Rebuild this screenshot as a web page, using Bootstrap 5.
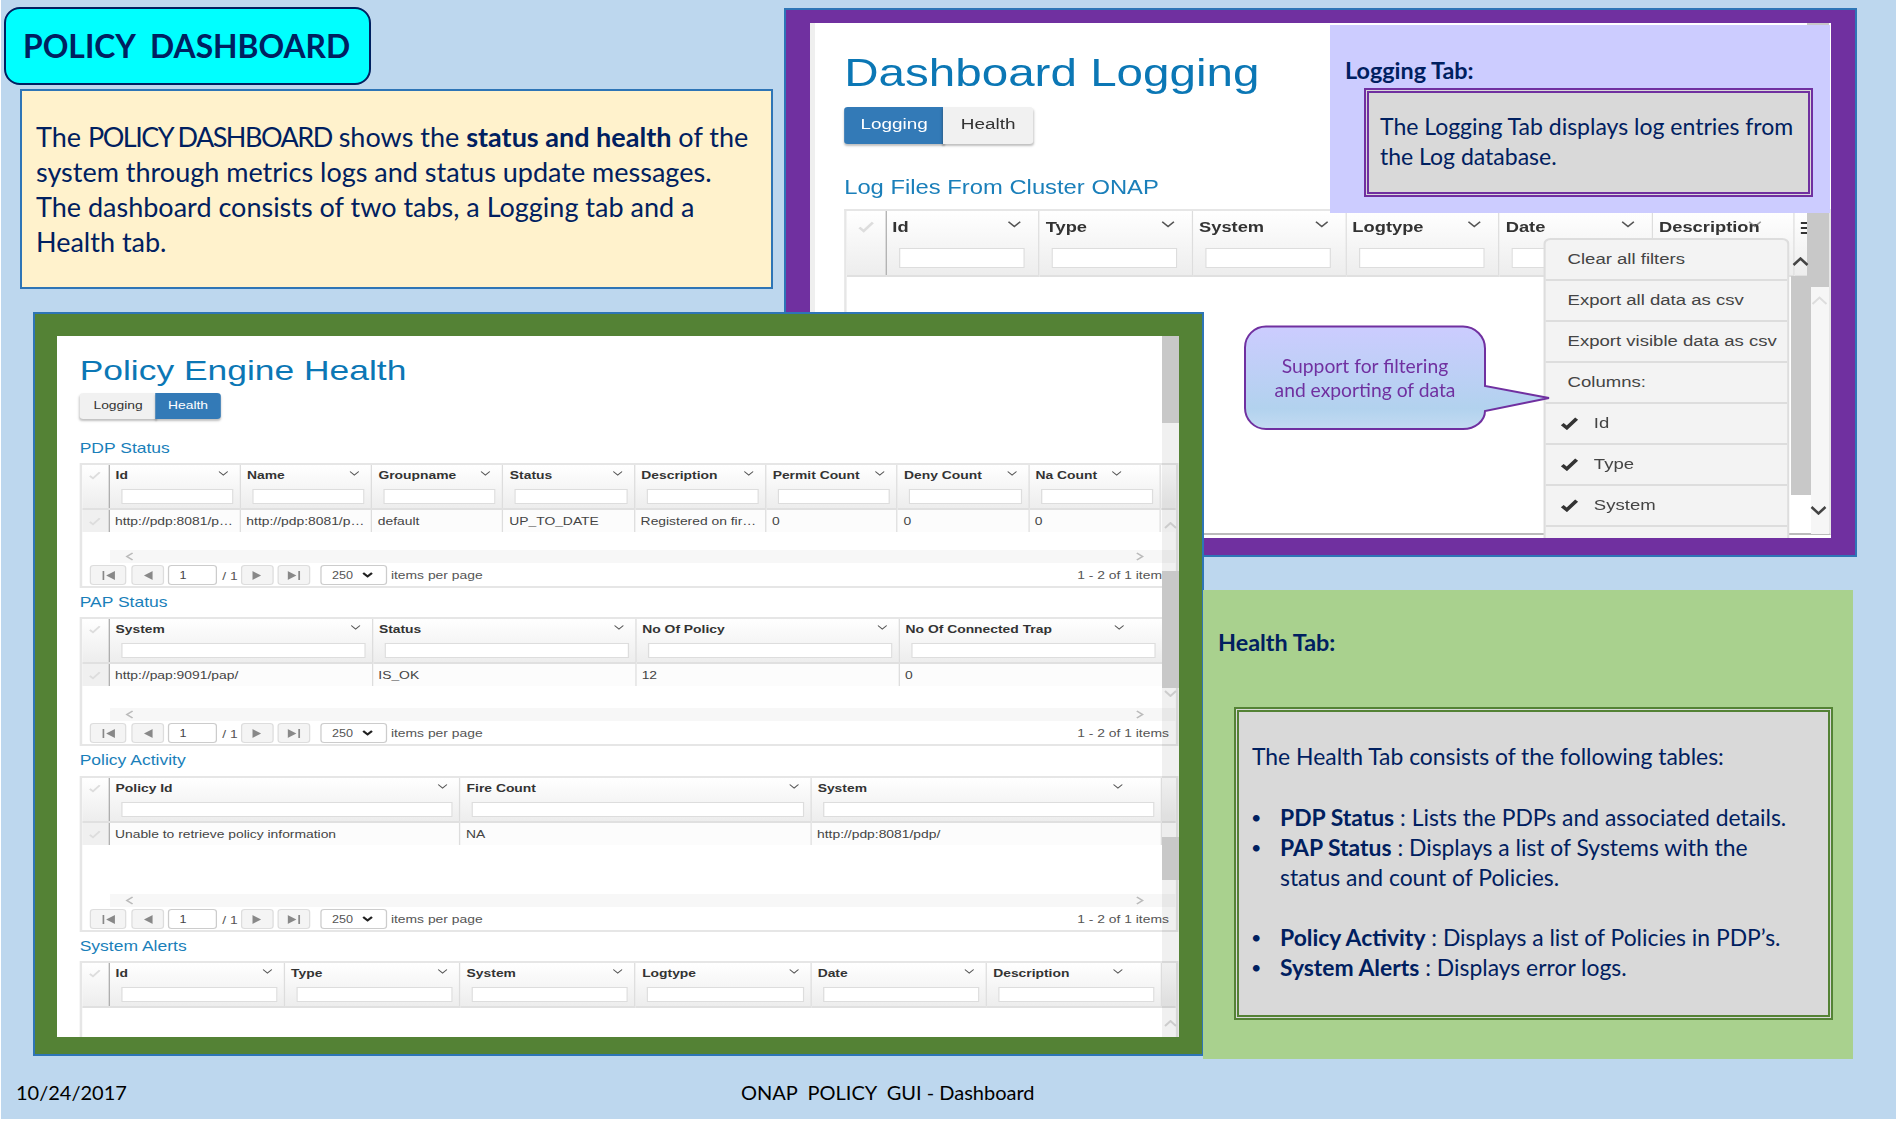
<!DOCTYPE html>
<html lang="en">
<head>
<meta charset="utf-8">
<title>Policy Dashboard</title>
<link href="https://cdn.jsdelivr.net/npm/bootstrap@5.3.0/dist/css/bootstrap.min.css" rel="stylesheet">
<style>
html,body{margin:0;background:#fff}
.slide{position:relative;width:1895px;height:1119px;margin-left:1px;background:#BDD7EE;overflow:hidden;font-family:Lato,"Noto Sans",sans-serif;color:#002060}
.slide>*{position:absolute}
.title-box{left:3px;top:7px;width:367px;height:78px;background:#0ff;border:2px solid #002060;border-radius:16px;padding:2px 0 0 17px;font-size:31.8px;font-weight:700;white-space:pre}
.intro{left:19px;top:89px;width:753px;height:200px;background:#FFF2CC;border:2px solid #2E75B6;padding-left:14px;font-size:27px;line-height:35px;white-space:nowrap}
.intro .caps{letter-spacing:-1.5px}
.win{border:2px solid #2E75B6;box-sizing:border-box}
.win-log{left:783px;top:8px;width:1073px;height:549px;background:#7030A0;padding:13px 24px 17px 24px;z-index:1}
.win-health{left:32px;top:312px;width:1171px;height:744px;background:#548235;padding:22px 23px 17px 22px;z-index:3}
.frame{position:relative;height:100%;background:#fff;overflow:hidden;font-family:"Liberation Sans",Arial,sans-serif;color:#333}
.frame-log{box-shadow:inset 5px 0 0 #efefef}
.scale{transform-origin:0 0}
.scale-log{width:calc(100% / 1.22);transform:scaleX(1.22);padding:28px 0 0 28px;position:relative;height:100%}
.scale-health{width:calc(100% / 1.26);transform:scaleX(1.26);padding:19px 0 0 18px;height:100%}
.shot-title{font-family:"Liberation Sans",Arial,sans-serif;font-weight:400;color:#0B77B5;margin:0}
.scale-log .shot-title{font-size:39px;line-height:44px}
.scale-health .shot-title{font-size:28.1px;line-height:32px}
.tabs .btn{border:0;border-radius:0;padding:0;box-shadow:0 2px 2px rgba(0,0,0,.25)}
.tabs .btn-primary{background:#337AB7;color:#fff}
.tabs .btn-light{background:#F1F1F1;color:#333}
.tabs .btn:first-child{border-radius:3px 0 0 3px}
.tabs .btn:last-child{border-radius:0 3px 3px 0}
.scale-log .tabs{margin-top:12px;height:37px}
.scale-log .tabs .btn{font-size:15.5px;line-height:33px;padding-bottom:4px}
.scale-log .tabs .t1{width:82px}
.scale-log .tabs .t2{width:74px}
.scale-health .tabs{margin-top:6px;height:26px}
.scale-health .tabs .btn{font-size:11px;line-height:25px;padding-bottom:1px}
.scale-health .tabs .t1{width:61px}
.scale-health .tabs .t2{width:52px}
.sec{font-family:"Liberation Sans",Arial,sans-serif;font-weight:400;color:#1A7FBA;margin:0}
.scale-log .sec{font-size:19.5px;line-height:22px;margin:32px 0 11px}
.scale-health .sec{font-size:13.9px;line-height:16px;margin:6px 0 7px}
.scale-health .sec.first{margin-top:21px}
.scale-health .sec.act{margin-bottom:8px}
.grid-box{border:2px solid #e6e6e6;display:flex;flex-direction:column;overflow:hidden}
.h-125{height:125px}.h-129{height:129px}.h-156{height:156px}.h-99{height:99px}
.h-326{height:326px;border-bottom-color:#bbb}
.grid{table-layout:fixed;width:100%;border-collapse:collapse;margin:0}
.grid th{padding:0;vertical-align:top;font-weight:700;background:linear-gradient(#fff,#ededed);border-left:1px solid #ddd;border-bottom:2px solid #e0e0e0;height:44px}
.grid th:first-child,.grid td:first-child{border-left:0}
.grid th:nth-child(2),.grid td:nth-child(2){border-left:1px solid #aaa}
.grid td{padding:0 4.5px;height:23px;font-size:11px;color:#444;background:#fcfcfc;border-left:1px solid #ddd;white-space:nowrap;overflow:hidden}
.grid td:first-child{background:#f0f0f0;padding:0;text-align:center}
.th-top{display:flex;justify-content:space-between;align-items:flex-start;font-size:11px;line-height:14px;padding:3px 9px 0 5px;height:24px;color:#333}
.th-top.lc{padding-right:30px}
.th-top.ds{justify-content:flex-start}
.th-top.ds .chev{margin-left:-9px;opacity:.6}
.filter.form-control{display:block;height:15px;min-height:0;margin-left:9px;width:calc(100% - 14px);padding:0;border:1px solid #ddd;border-radius:0;background:#fff}
.sel{text-align:center;padding-top:6px;line-height:0}
.chev{flex:none;margin-top:3px;width:8px;height:5px}
.w-sel{width:21px}.w-104{width:104.3px}.w-209{width:209px}.w-279{width:278.6px}.w-139{width:139.3px}
.w-sel-l{width:32px}.w-125{width:125.7px}.w-116{width:116.4px}
.scale-log .grid th{height:65px}
.scale-log .th-top{font-size:15px;line-height:20px;padding:6px 14px 0 5px;height:37px}
.scale-log .filter.form-control{height:20px;margin-left:10px;width:103px}
.scale-log .chev{width:11px;height:7px;margin-top:4px}
.scale-log .sel{padding-top:10px}
.bars{display:block;width:7px;margin-top:5px}
.strip{margin:auto 0 0 22px;height:13px;background:#f7f7f7;flex:none;display:flex;justify-content:space-between;align-items:center;padding:0 25px 0 12px}
.pager{display:flex;align-items:center;height:20px;margin:2px 0 1px;padding:0 6px 0 6.4px;font-size:11px;color:#555;flex:none}
.pager .btn{padding:0;height:20px;border:1px solid #ddd;border-radius:3px;background:#f4f4f4;display:flex;align-items:center;justify-content:center}
.pager .p1{width:28.6px}.pager .p2{width:26.2px;margin-left:4px}.pager .p3{width:26.2px}.pager .p4{width:25.8px;margin-left:3.2px}
.pg-input{width:39px;height:20px;margin-left:3px;border:1px solid #ccc;border-radius:3px;padding:3px 0 0 8px;font-size:10px;line-height:14px;color:#444}
.pg-of{width:18.6px;padding:3px 0 0 4px;font-size:11px;white-space:nowrap}
.pg-sel{width:52.4px;height:20px;margin:0 3.4px 0 8.3px;border:1px solid #ccc;border-radius:3px;display:flex;align-items:center;justify-content:space-between;padding:0 10px 0 8px;font-size:10px;color:#555}
.pg-sel svg{width:9px;height:6px}
.vbar{position:absolute;top:0;bottom:0;right:0;width:17px;display:flex;flex-direction:column;z-index:2}
.vbar>div{flex:none;display:flex;justify-content:center;align-items:flex-start}
.vbar svg{width:13px;height:7px}
.thumb{background:#c8c8c8}
.track{background:rgba(0,0,0,.06)}
.v1{height:87px}.v2{height:148px;padding-top:99px}.v3{height:117px}.v4{height:149px;padding-top:2px}.v5{height:43px}.v6{height:157px;padding-top:140px}
.col-menu{position:absolute;left:600.5px;top:215px;width:202px;height:320px;background:#f3f3f3;border:2px solid #ddd;border-bottom:0;font-size:15.2px;color:#444;z-index:2}
.col-menu .list-group-item{height:41px;border:0;border-bottom:2px solid #ddd;border-radius:0;background:transparent;color:#444;padding:0 0 0 18.5px;display:flex;align-items:center}
.col-menu .ck{padding-left:12px}
.col-menu .ck svg{width:15px;height:13px;margin-right:13px;flex:none}
.l-track{position:absolute;right:2px;top:264px;bottom:4px;width:18px;background:#f6f6f6;z-index:1}
.l-thumb{position:absolute;right:2px;top:0;width:22px;height:264px;background:#c8c8c8;z-index:1}
.m-thumb{position:absolute;left:981px;top:253px;width:20px;height:219px;background:#c8c8c8;z-index:3}
.arrow{position:absolute;z-index:3;width:17px;height:9px}
.a1{left:982px;top:234px}.a2{left:1000px;top:483px}.a3{left:1001px;top:273px}
.lav{left:1329px;top:25px;width:500px;height:188px;background:#CCF;padding:30px 0 0 15px;z-index:2}
.tab-h{font-weight:700;font-size:23.4px;line-height:30px;margin:0;color:#002060}
.grey{background:#D9D9D9;border-style:double;border-width:5px;box-sizing:border-box}
.lav .grey{border-color:#7030A0;margin:3px 0 0 19px;width:449px;height:109px;padding:19px 0 0 11px;font-size:23px;line-height:29.5px;white-space:nowrap}
.callout{left:1243px;top:325px;width:306px;height:105px;z-index:2}
.callout svg{position:absolute;left:0;top:0}
.callout div{position:relative;width:242px;height:105px;padding-top:1px;display:flex;align-items:center;justify-content:center;text-align:center;font-size:19.3px;line-height:24.5px;color:#7030A0}
.hbox{left:1202px;top:590px;width:650px;height:469px;background:#A9D18E;padding:37px 0 0 15px;z-index:4}
.hbox .grey{border-color:#548235;margin:50px 0 0 16px;width:599px;height:313px;padding:29px 0 0 13px;font-size:22.9px;line-height:30px;white-space:nowrap}
.hbox p{margin:0 0 31px}
.hbox ul{margin:0;padding-left:28px;list-style:none}
.hbox ul+ul{margin-top:30px}
.hbox li{position:relative}
.hbox li::before{content:"•";position:absolute;left:-29px;font-size:18px}
.foot{top:1079px;font-size:20px;line-height:26px;color:#000;white-space:pre}
.f1{left:15px}.f2{left:740px}
</style>
</head>
<body>
<div class="slide">
  <div class="title-box d-flex align-items-center">POLICY  DASHBOARD</div>
  <div class="intro d-flex align-items-center"><div>The <span class="caps">POLICY DASHBOARD</span> shows the <b>status and health</b> of the<br>system through metrics logs and status update messages.<br>The dashboard consists of two tabs, a Logging tab and a<br>Health tab.</div></div>

  <div class="win win-log">
    <div class="frame frame-log">
      <div class="scale scale-log">
        <h1 class="shot-title">Dashboard Logging</h1>
        <div class="tabs btn-group d-flex w-auto justify-content-start">
          <button class="btn btn-primary t1 flex-grow-0" type="button">Logging</button>
          <button class="btn btn-light t2 flex-grow-0" type="button">Health</button>
        </div>
        <h3 class="sec">Log Files From Cluster ONAP</h3>
        <div class="grid-box h-326">
          <table class="grid">
            <colgroup><col class="w-sel-l"><col class="w-125"><col class="w-125"><col class="w-125"><col class="w-125"><col class="w-125"><col class="w-116"><col></colgroup>
            <thead><tr>
              <th><div class="sel"><svg width="14" height="12" viewBox="0 0 14 12"><path d="M1.5 6.5 5 10 12.5 1.5" fill="none" stroke="#ddd" stroke-width="2.4"/></svg></div></th>
              <th><div class="th-top">Id<svg class="chev" viewBox="0 0 8 5"><path d="M.5.5 4 4 7.500.5" fill="none" stroke="#555" stroke-width="1"/></svg></div><input class="form-control filter" type="text"></th>
              <th><div class="th-top">Type<svg class="chev" viewBox="0 0 8 5"><path d="M.5.5 4 4 7.500.5" fill="none" stroke="#555" stroke-width="1"/></svg></div><input class="form-control filter" type="text"></th>
              <th><div class="th-top">System<svg class="chev" viewBox="0 0 8 5"><path d="M.5.5 4 4 7.500.5" fill="none" stroke="#555" stroke-width="1"/></svg></div><input class="form-control filter" type="text"></th>
              <th><div class="th-top">Logtype<svg class="chev" viewBox="0 0 8 5"><path d="M.5.5 4 4 7.500.5" fill="none" stroke="#555" stroke-width="1"/></svg></div><input class="form-control filter" type="text"></th>
              <th><div class="th-top">Date<svg class="chev" viewBox="0 0 8 5"><path d="M.5.5 4 4 7.500.5" fill="none" stroke="#555" stroke-width="1"/></svg></div><input class="form-control filter" type="text"></th>
              <th><div class="th-top ds">Description<svg class="chev" viewBox="0 0 8 5"><path d="M.5.5 4 4 7.500.5" fill="none" stroke="#555" stroke-width="1"/></svg></div></th>
              <th><div class="th-top"><svg class="bars" viewBox="0 0 7 12" height="12"><path d="M0 1h7M0 6h7M0 11h7" stroke="#333" stroke-width="2"/></svg></div></th>
            </tr></thead>
          </table>
        </div>
        <div class="col-menu list-group">
          <div class="list-group-item">Clear all filters</div>
          <div class="list-group-item">Export all data as csv</div>
          <div class="list-group-item">Export visible data as csv</div>
          <div class="list-group-item">Columns:</div>
          <div class="list-group-item ck"><svg viewBox="0 0 14 12"><path d="M1.500 6.500 5 10 12.500 1.500" fill="none" stroke="#333" stroke-width="3"/></svg>Id</div>
          <div class="list-group-item ck"><svg viewBox="0 0 14 12"><path d="M1.500 6.500 5 10 12.500 1.500" fill="none" stroke="#333" stroke-width="3"/></svg>Type</div>
          <div class="list-group-item ck"><svg viewBox="0 0 14 12"><path d="M1.500 6.500 5 10 12.500 1.500" fill="none" stroke="#333" stroke-width="3"/></svg>System</div>
        </div>
      </div>
      <div class="l-thumb"></div>
      <div class="l-track"></div>
      <div class="m-thumb"></div>
      <svg class="arrow a1" viewBox="0 0 17 9"><path d="M1.500 8 8.500 1.500 15.500 8" fill="none" stroke="#444" stroke-width="2.500"/></svg>
      <svg class="arrow a2" viewBox="0 0 17 9"><path d="M1.500 1 8.500 7.500 15.500 1" fill="none" stroke="#444" stroke-width="2.500"/></svg>
      <svg class="arrow a3" viewBox="0 0 17 9"><path d="M1.500 8 8.500 1.500 15.500 8" fill="none" stroke="#ddd" stroke-width="2"/></svg>
    </div>
  </div>

  <div class="lav">
    <h4 class="tab-h">Logging Tab:</h4>
    <div class="grey">The Logging Tab displays log entries from<br>the Log database.</div>
  </div>

  <div class="callout">
    <svg width="306" height="105" viewBox="0 0 306 105"><defs><linearGradient id="cg" x1="0" y1="0" x2="0" y2="1"><stop offset="0" stop-color="#CCCCFF"/><stop offset=".8" stop-color="#B2D2EE"/><stop offset="1" stop-color="#C3DBF2"/></linearGradient></defs><path d="M22 1.500H219a22 22 0 0 1 22 22V61L305 73 241 86a22 18 0 0 1-22 18H22a21 21 0 0 1-21-21V22.500a21 21 0 0 1 21-21z" fill="url(#cg)" stroke="#7030A0" stroke-width="2"/></svg>
    <div>Support for filtering<br>and exporting of data</div>
  </div>

  <div class="win win-health">
    <div class="frame">
      <div class="scale scale-health">
        <h1 class="shot-title">Policy Engine Health</h1>
        <div class="tabs btn-group d-flex w-auto justify-content-start">
          <button class="btn btn-light t1 flex-grow-0" type="button">Logging</button>
          <button class="btn btn-primary t2 flex-grow-0" type="button">Health</button>
        </div>

        <h3 class="sec first">PDP Status</h3>
        <div class="grid-box h-125">
          <table class="grid">
            <colgroup><col class="w-sel"><col class="w-104"><col class="w-104"><col class="w-104"><col class="w-104"><col class="w-104"><col class="w-104"><col class="w-104"><col class="w-104"><col></colgroup>
            <thead><tr>
              <th><div class="sel"><svg width="10" height="9" viewBox="0 0 14 12"><path d="M1.500 6.500 5 10 12.500 1.500" fill="none" stroke="#ddd" stroke-width="2.400"/></svg></div></th>
              <th><div class="th-top">Id<svg class="chev" viewBox="0 0 8 5"><path d="M.5.5 4 4 7.500.5" fill="none" stroke="#555"/></svg></div><input class="form-control filter" type="text"></th>
              <th><div class="th-top">Name<svg class="chev" viewBox="0 0 8 5"><path d="M.5.5 4 4 7.500.5" fill="none" stroke="#555"/></svg></div><input class="form-control filter" type="text"></th>
              <th><div class="th-top">Groupname<svg class="chev" viewBox="0 0 8 5"><path d="M.5.5 4 4 7.500.5" fill="none" stroke="#555"/></svg></div><input class="form-control filter" type="text"></th>
              <th><div class="th-top">Status<svg class="chev" viewBox="0 0 8 5"><path d="M.5.5 4 4 7.500.5" fill="none" stroke="#555"/></svg></div><input class="form-control filter" type="text"></th>
              <th><div class="th-top">Description<svg class="chev" viewBox="0 0 8 5"><path d="M.5.5 4 4 7.500.5" fill="none" stroke="#555"/></svg></div><input class="form-control filter" type="text"></th>
              <th><div class="th-top">Permit Count<svg class="chev" viewBox="0 0 8 5"><path d="M.5.5 4 4 7.500.5" fill="none" stroke="#555"/></svg></div><input class="form-control filter" type="text"></th>
              <th><div class="th-top">Deny Count<svg class="chev" viewBox="0 0 8 5"><path d="M.5.5 4 4 7.500.5" fill="none" stroke="#555"/></svg></div><input class="form-control filter" type="text"></th>
              <th><div class="th-top lc">Na Count<svg class="chev" viewBox="0 0 8 5"><path d="M.5.5 4 4 7.500.5" fill="none" stroke="#555"/></svg></div><input class="form-control filter" type="text"></th>
              <th></th>
            </tr></thead>
            <tbody><tr>
              <td><svg width="10" height="9" viewBox="0 0 14 12"><path d="M1.500 6.500 5 10 12.500 1.500" fill="none" stroke="#ddd" stroke-width="2.400"/></svg></td>
              <td>http://pdp:8081/p…</td><td>http://pdp:8081/p…</td><td>default</td><td>UP_TO_DATE</td><td>Registered on fir…</td><td>0</td><td>0</td><td>0</td><td></td>
            </tr></tbody>
          </table>
          <div class="strip"><svg width="7" height="9" viewBox="0 0 7 9"><path d="M6 1 1.500 4.500 6 8" fill="none" stroke="#bbb" stroke-width="1.500"/></svg><svg width="7" height="9" viewBox="0 0 7 9"><path d="M1 1 5.500 4.500 1 8" fill="none" stroke="#bbb" stroke-width="1.500"/></svg></div>
          <div class="pager">
            <button class="btn p1" type="button"><svg width="10" height="9" viewBox="0 0 10 9"><path d="M0 0h1.500v9H0zM10 0v9L3 4.500z" fill="#888"/></svg></button>
            <button class="btn p2" type="button"><svg width="7" height="9" viewBox="0 0 7 9"><path d="M7 0v9L0 4.500z" fill="#888"/></svg></button>
            <div class="pg-input">1</div><div class="pg-of">/ 1</div>
            <button class="btn p3" type="button"><svg width="7" height="9" viewBox="0 0 7 9"><path d="M0 0v9l7-4.500z" fill="#888"/></svg></button>
            <button class="btn p4" type="button"><svg width="10" height="9" viewBox="0 0 10 9"><path d="M0 0v9l7-4.500zM8.500 0H10v9H8.500z" fill="#888"/></svg></button>
            <div class="pg-sel">250<svg viewBox="0 0 9 6"><path d="M1 1 4.500 4.500 8 1" fill="none" stroke="#222" stroke-width="1.800"/></svg></div>
            <span>items per page</span><span class="ms-auto">1 - 2 of 1 items</span>
          </div>
        </div>

        <h3 class="sec">PAP Status</h3>
        <div class="grid-box h-129">
          <table class="grid">
            <colgroup><col class="w-sel"><col class="w-209"><col class="w-209"><col class="w-209"><col class="w-209"><col></colgroup>
            <thead><tr>
              <th><div class="sel"><svg width="10" height="9" viewBox="0 0 14 12"><path d="M1.500 6.500 5 10 12.500 1.500" fill="none" stroke="#ddd" stroke-width="2.400"/></svg></div></th>
              <th><div class="th-top">System<svg class="chev" viewBox="0 0 8 5"><path d="M.5.5 4 4 7.500.5" fill="none" stroke="#555"/></svg></div><input class="form-control filter" type="text"></th>
              <th><div class="th-top">Status<svg class="chev" viewBox="0 0 8 5"><path d="M.5.5 4 4 7.500.5" fill="none" stroke="#555"/></svg></div><input class="form-control filter" type="text"></th>
              <th><div class="th-top">No Of Policy<svg class="chev" viewBox="0 0 8 5"><path d="M.5.5 4 4 7.500.5" fill="none" stroke="#555"/></svg></div><input class="form-control filter" type="text"></th>
              <th><div class="th-top lc">No Of Connected Trap<svg class="chev" viewBox="0 0 8 5"><path d="M.5.5 4 4 7.500.5" fill="none" stroke="#555"/></svg></div><input class="form-control filter" type="text"></th>
              <th></th>
            </tr></thead>
            <tbody><tr>
              <td><svg width="10" height="9" viewBox="0 0 14 12"><path d="M1.500 6.500 5 10 12.500 1.500" fill="none" stroke="#ddd" stroke-width="2.400"/></svg></td>
              <td>http://pap:9091/pap/</td><td>IS_OK</td><td>12</td><td>0</td><td></td>
            </tr></tbody>
          </table>
          <div class="strip"><svg width="7" height="9" viewBox="0 0 7 9"><path d="M6 1 1.500 4.500 6 8" fill="none" stroke="#bbb" stroke-width="1.500"/></svg><svg width="7" height="9" viewBox="0 0 7 9"><path d="M1 1 5.500 4.500 1 8" fill="none" stroke="#bbb" stroke-width="1.500"/></svg></div>
          <div class="pager">
            <button class="btn p1" type="button"><svg width="10" height="9" viewBox="0 0 10 9"><path d="M0 0h1.500v9H0zM10 0v9L3 4.500z" fill="#888"/></svg></button>
            <button class="btn p2" type="button"><svg width="7" height="9" viewBox="0 0 7 9"><path d="M7 0v9L0 4.500z" fill="#888"/></svg></button>
            <div class="pg-input">1</div><div class="pg-of">/ 1</div>
            <button class="btn p3" type="button"><svg width="7" height="9" viewBox="0 0 7 9"><path d="M0 0v9l7-4.500z" fill="#888"/></svg></button>
            <button class="btn p4" type="button"><svg width="10" height="9" viewBox="0 0 10 9"><path d="M0 0v9l7-4.500zM8.500 0H10v9H8.500z" fill="#888"/></svg></button>
            <div class="pg-sel">250<svg viewBox="0 0 9 6"><path d="M1 1 4.500 4.500 8 1" fill="none" stroke="#222" stroke-width="1.800"/></svg></div>
            <span>items per page</span><span class="ms-auto">1 - 2 of 1 items</span>
          </div>
        </div>

        <h3 class="sec act">Policy Activity</h3>
        <div class="grid-box h-156">
          <table class="grid">
            <colgroup><col class="w-sel"><col class="w-279"><col class="w-279"><col class="w-279"><col></colgroup>
            <thead><tr>
              <th><div class="sel"><svg width="10" height="9" viewBox="0 0 14 12"><path d="M1.500 6.500 5 10 12.500 1.500" fill="none" stroke="#ddd" stroke-width="2.400"/></svg></div></th>
              <th><div class="th-top">Policy Id<svg class="chev" viewBox="0 0 8 5"><path d="M.5.5 4 4 7.500.5" fill="none" stroke="#555"/></svg></div><input class="form-control filter" type="text"></th>
              <th><div class="th-top">Fire Count<svg class="chev" viewBox="0 0 8 5"><path d="M.5.5 4 4 7.500.5" fill="none" stroke="#555"/></svg></div><input class="form-control filter" type="text"></th>
              <th><div class="th-top lc">System<svg class="chev" viewBox="0 0 8 5"><path d="M.5.5 4 4 7.500.5" fill="none" stroke="#555"/></svg></div><input class="form-control filter" type="text"></th>
              <th></th>
            </tr></thead>
            <tbody><tr>
              <td><svg width="10" height="9" viewBox="0 0 14 12"><path d="M1.500 6.500 5 10 12.500 1.500" fill="none" stroke="#ddd" stroke-width="2.400"/></svg></td>
              <td>Unable to retrieve policy information</td><td>NA</td><td>http://pdp:8081/pdp/</td><td></td>
            </tr></tbody>
          </table>
          <div class="strip"><svg width="7" height="9" viewBox="0 0 7 9"><path d="M6 1 1.500 4.500 6 8" fill="none" stroke="#bbb" stroke-width="1.500"/></svg><svg width="7" height="9" viewBox="0 0 7 9"><path d="M1 1 5.500 4.500 1 8" fill="none" stroke="#bbb" stroke-width="1.500"/></svg></div>
          <div class="pager">
            <button class="btn p1" type="button"><svg width="10" height="9" viewBox="0 0 10 9"><path d="M0 0h1.500v9H0zM10 0v9L3 4.500z" fill="#888"/></svg></button>
            <button class="btn p2" type="button"><svg width="7" height="9" viewBox="0 0 7 9"><path d="M7 0v9L0 4.500z" fill="#888"/></svg></button>
            <div class="pg-input">1</div><div class="pg-of">/ 1</div>
            <button class="btn p3" type="button"><svg width="7" height="9" viewBox="0 0 7 9"><path d="M0 0v9l7-4.500z" fill="#888"/></svg></button>
            <button class="btn p4" type="button"><svg width="10" height="9" viewBox="0 0 10 9"><path d="M0 0v9l7-4.500zM8.500 0H10v9H8.500z" fill="#888"/></svg></button>
            <div class="pg-sel">250<svg viewBox="0 0 9 6"><path d="M1 1 4.500 4.500 8 1" fill="none" stroke="#222" stroke-width="1.800"/></svg></div>
            <span>items per page</span><span class="ms-auto">1 - 2 of 1 items</span>
          </div>
        </div>

        <h3 class="sec">System Alerts</h3>
        <div class="grid-box h-99">
          <table class="grid">
            <colgroup><col class="w-sel"><col class="w-139"><col class="w-139"><col class="w-139"><col class="w-139"><col class="w-139"><col class="w-139"><col></colgroup>
            <thead><tr>
              <th><div class="sel"><svg width="10" height="9" viewBox="0 0 14 12"><path d="M1.500 6.500 5 10 12.500 1.500" fill="none" stroke="#ddd" stroke-width="2.400"/></svg></div></th>
              <th><div class="th-top">Id<svg class="chev" viewBox="0 0 8 5"><path d="M.5.5 4 4 7.500.5" fill="none" stroke="#555"/></svg></div><input class="form-control filter" type="text"></th>
              <th><div class="th-top">Type<svg class="chev" viewBox="0 0 8 5"><path d="M.5.5 4 4 7.500.5" fill="none" stroke="#555"/></svg></div><input class="form-control filter" type="text"></th>
              <th><div class="th-top">System<svg class="chev" viewBox="0 0 8 5"><path d="M.5.5 4 4 7.500.5" fill="none" stroke="#555"/></svg></div><input class="form-control filter" type="text"></th>
              <th><div class="th-top">Logtype<svg class="chev" viewBox="0 0 8 5"><path d="M.5.5 4 4 7.500.5" fill="none" stroke="#555"/></svg></div><input class="form-control filter" type="text"></th>
              <th><div class="th-top">Date<svg class="chev" viewBox="0 0 8 5"><path d="M.5.5 4 4 7.500.5" fill="none" stroke="#555"/></svg></div><input class="form-control filter" type="text"></th>
              <th><div class="th-top lc">Description<svg class="chev" viewBox="0 0 8 5"><path d="M.5.5 4 4 7.500.5" fill="none" stroke="#555"/></svg></div><input class="form-control filter" type="text"></th>
              <th></th>
            </tr></thead>
          </table>
        </div>
      </div>
      <div class="vbar">
        <div class="thumb v1"></div>
        <div class="track v2"><svg viewBox="0 0 13 7"><path d="M1 6 6.500 1 12 6" fill="none" stroke="#ccc" stroke-width="2"/></svg></div>
        <div class="thumb v3"></div>
        <div class="track v4"><svg viewBox="0 0 13 7"><path d="M1 1 6.500 6 12 1" fill="none" stroke="#ccc" stroke-width="2"/></svg></div>
        <div class="thumb v5"></div>
        <div class="track v6"><svg viewBox="0 0 13 7"><path d="M1 6 6.500 1 12 6" fill="none" stroke="#ccc" stroke-width="2"/></svg></div>
      </div>
    </div>
  </div>

  <div class="hbox">
    <h4 class="tab-h">Health Tab:</h4>
    <div class="grey">
      <p>The Health Tab consists of the following tables:</p>
      <ul>
        <li><b>PDP Status</b> : Lists the PDPs and associated details.</li>
        <li><b>PAP Status</b> : Displays a list of Systems with the<br>status and count of Policies.</li>
      </ul>
      <ul>
        <li><b>Policy Activity</b> : Displays a list of Policies in PDP’s.</li>
        <li><b>System Alerts</b> : Displays error logs.</li>
      </ul>
    </div>
  </div>

  <div class="foot f1">10/24/2017</div>
  <div class="foot f2">ONAP  POLICY  GUI - Dashboard</div>
</div>
<script src="https://cdn.jsdelivr.net/npm/bootstrap@5.3.0/dist/js/bootstrap.bundle.min.js"></script>
</body>
</html>
